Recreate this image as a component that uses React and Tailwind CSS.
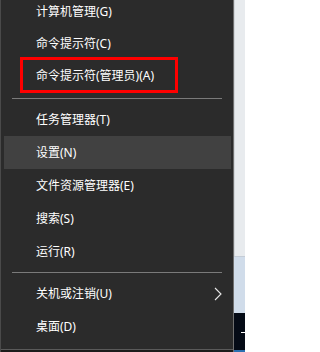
const font = { fontFamily: '"Noto Sans", "Noto Sans CJK SC", sans-serif' }

const groups = [
  [
    { label: '计算机管理(G)', h: 'h-[32px]' },
    { label: '命令提示符(C)', h: 'h-[32px]' },
    { label: '命令提示符(管理员)(A)', h: 'h-[32px]', boxed: true },
  ],
  [
    { label: '任务管理器(T)', h: 'h-[33px]' },
    { label: '设置(N)', h: 'h-[33px]', active: true },
    { label: '文件资源管理器(E)', h: 'h-[33px]' },
    { label: '搜索(S)', h: 'h-[33px]' },
    { label: '运行(R)', h: 'h-[33px]' },
  ],
  [
    { label: '关机或注销(U)', h: 'h-[33px]', sub: true },
    { label: '桌面(D)', h: 'h-[33px]' },
  ],
]

function Chevron() {
  return (
    <svg width="8" height="14" viewBox="0 0 8 14" className="mr-[11px]">
      <polyline points="1,1 7,7 1,13" fill="none" stroke="#e8e8e8" strokeWidth="1.1" />
    </svg>
  )
}

function MenuItem({ item }) {
  return (
    <div className={`relative ${item.h} flex items-center justify-between ${item.active ? 'bg-[#414141] ml-[3px] mr-[2px] pl-[32px]' : 'pl-[35px]'}`}>
      <span className="text-[12px] leading-none text-white">{item.label}</span>
      {item.sub && <Chevron />}
      {item.boxed && (
        <div className="absolute left-[19px] top-[-3px] w-[158px] h-[36px] border-[3px] border-[#ff0000]" />
      )}
    </div>
  )
}

export default function App() {
  return (
    <div className="flex w-[245px] h-[352px] overflow-hidden bg-[#050b16]" style={font}>
      {/* Menu */}
      <div className="w-[233px] h-full bg-[#2b2b2b] border-l border-[#4a4a4a] flex flex-col">
        <div className="-mt-[4px] flex flex-col">
          {groups.map((group, gi) => (
            <div key={gi}>
              {gi === 1 && <div className="pt-[6px] pb-[4px]"><div className="mx-[11px] h-px bg-[#7a7a7a]" /></div>}
              {gi === 2 && <div className="pt-[4px] pb-[4px]"><div className="mx-[11px] h-px bg-[#7a7a7a]" /></div>}
              {group.map((item) => (
                <MenuItem key={item.label} item={item} />
              ))}
            </div>
          ))}
        </div>
        <div className="flex-1" />
        <div className="h-px bg-[#5a5a5a]" />
        <div className="h-[2px] bg-[#1c1c1c]" />
      </div>

      <div className="w-px h-full bg-[#6f6f6f]" />

      {/* Desktop behind */}
      <div className="flex-1 flex flex-col">
        <div className="h-[256px] bg-[#e8ebee] border-l border-[#d2d6da]" />
        <div className="h-[57px] bg-[#d0dcea] border-t border-[#c4ccd6]" />
        <div className="flex-1 flex flex-col bg-[#050b16]">
          <div className="flex-1 flex items-center justify-end">
            <div className="w-[4px] h-px bg-white mt-[1px]" />
          </div>
          <div className="h-[2px] bg-[#2a6fb0]" />
        </div>
      </div>
    </div>
  )
}
